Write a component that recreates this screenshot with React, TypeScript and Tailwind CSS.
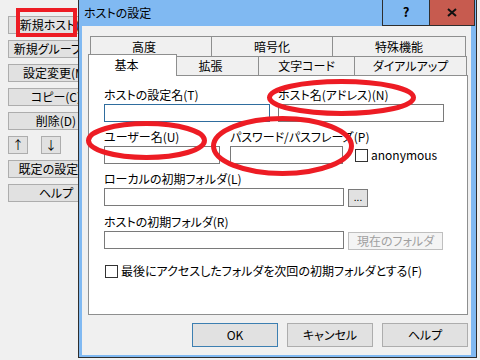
import React from "react";

const FONT =
  "[font-family:'Noto_Sans_CJK_JP','Noto_Sans',sans-serif] [font-feature-settings:'palt']";

function LeftBtn({ label }: { label: string }) {
  return (
    <div className="h-[18px] w-[96px] border border-[#adadad] bg-[#e1e1e1] flex items-center justify-center text-[12px] leading-none whitespace-nowrap text-black">
      {label}
    </div>
  );
}

function Input({ w, focus }: { w: string; focus?: boolean }) {
  return (
    <div
      className={`${w} h-[18px] bg-white border ${
        focus ? "border-[#2f6d9e]" : "border-[#7a7a7a]"
      }`}
    />
  );
}

function Label({ children }: { children: React.ReactNode }) {
  return (
    <div className="h-[16px] leading-[16px] text-[12px] whitespace-nowrap text-black">
      {children}
    </div>
  );
}

function CheckBox() {
  return <div className="w-[13px] h-[13px] border border-[#333333] bg-white shrink-0" />;
}

function DlgBtn({ label, def }: { label: string; def?: boolean }) {
  return (
    <div
      className={`w-[86px] h-[24px] flex items-center justify-center text-[12px] bg-[#e1e1e1] border ${
        def ? "border-[#3c7fb1]" : "border-[#adadad]"
      }`}
    >
      {label}
    </div>
  );
}

export default function App() {
  return (
    <div
      className={`relative w-[480px] h-[360px] overflow-hidden bg-[#f0f0f0] text-black ${FONT}`}
    >
      {/* Left host list buttons */}
      <div className="pt-[16px] pl-[8px] flex flex-col gap-[6px]">
        <LeftBtn label="新規ホスト(N)" />
        <LeftBtn label="新規グループ(G)" />
        <LeftBtn label="設定変更(M)" />
        <LeftBtn label="コピー(C)" />
        <LeftBtn label="削除(D)" />
        <div className="flex gap-[13px]">
          <div className="w-[20px] h-[18px] border border-[#adadad] bg-[#e1e1e1] flex items-center justify-center text-[12px]">
            ↑
          </div>
          <div className="w-[20px] h-[18px] border border-[#adadad] bg-[#e1e1e1] flex items-center justify-center text-[12px]">
            ↓
          </div>
        </div>
        <LeftBtn label="既定の設定(S)" />
        <LeftBtn label="ヘルプ" />
      </div>

      {/* Dialog window */}
      <div className="absolute left-[78px] top-[-1px] w-[399px] h-[359px] border border-[#2e2e2e] bg-[#80b9f2] flex flex-col">
        <div className="relative h-[26px] shrink-0 flex items-center pl-[5px] text-[12px]">
          ホストの設定
          <div className="absolute right-[1px] top-[-1px] flex">
            <div className="w-[47px] h-[27px] border border-r-0 border-[#2e2e2e] bg-[#80b9f2] flex items-center justify-center text-[13px] font-bold pb-[1px]">
              ?
            </div>
            <div className="w-[46px] h-[27px] border border-[#2e2e2e] bg-[#c75b4f] flex items-center justify-center">
              <svg width="10" height="9" viewBox="0 0 10 9">
                <path d="M1 1 L9 8 M9 1 L1 8" stroke="#111" strokeWidth="2" />
              </svg>
            </div>
          </div>
        </div>

        <div className="flex-1 ml-[3px] mr-[5px] mb-[2px] bg-[#f0f0f0] pt-[10px] pl-[6px] pr-[3px] flex flex-col">
          {/* tabs back row */}
          <div className="flex ml-[2px] h-[20px] text-[12px]">
            <div className="w-[122px] h-[20px] border border-b-0 border-[#8e8f8f] bg-[#f0f0f0] flex items-center justify-center pr-[14px]">
              高度
            </div>
            <div className="w-[122px] h-[20px] -ml-px border border-b-0 border-[#8e8f8f] bg-[#f0f0f0] flex items-center justify-center">
              暗号化
            </div>
            <div className="w-[134px] h-[20px] -ml-px border border-b-0 border-[#8e8f8f] bg-[#f0f0f0] flex items-center justify-center">
              特殊機能
            </div>
          </div>
          {/* tabs front row */}
          <div className="flex items-end h-[19px] text-[12px]">
            <div className="relative z-10 w-[89px] h-[22px] -mb-px border border-b-0 border-[#8e8f8f] bg-white flex items-center justify-center pr-[12px] pb-[2px]">
              基本
            </div>
            <div className="w-[83px] h-[19px] -ml-px border border-b-0 border-[#8e8f8f] bg-[#f0f0f0] flex items-center justify-center pr-[14px]">
              拡張
            </div>
            <div className="w-[97px] h-[19px] -ml-px border border-b-0 border-[#8e8f8f] bg-[#f0f0f0] flex items-center justify-center">
              文字コード
            </div>
            <div className="w-[113px] h-[19px] -ml-px border border-b-0 border-[#8e8f8f] bg-[#f0f0f0] flex items-center justify-center">
              ダイアルアップ
            </div>
          </div>

          {/* panel */}
          <div className="w-[380px] h-[240px] shrink-0 border border-[#8e8f8f] bg-white pl-[15px] pt-[11px] flex flex-col">
            <div className="flex gap-[8px]">
              <div className="w-[166px] shrink-0 flex flex-col gap-[1px]">
                <Label>ホストの設定名(T)</Label>
                <Input w="w-[166px]" focus />
              </div>
              <div className="w-[166px] shrink-0 flex flex-col gap-[1px]">
                <Label>ホスト名(アドレス)(N)</Label>
                <Input w="w-[166px]" />
              </div>
            </div>

            <div className="flex items-end mt-[7px]">
              <div className="w-[116px] shrink-0 flex flex-col gap-[1px]">
                <Label>ユーザー名(U)</Label>
                <Input w="w-[116px]" />
              </div>
              <div className="w-[113px] shrink-0 flex flex-col gap-[1px] ml-[10px]">
                <Label>パスワード/パスフレーズ(P)</Label>
                <Input w="w-[113px]" />
              </div>
              <div className="flex items-center h-[18px] ml-[12px] gap-[3px]">
                <CheckBox />
                <span className="text-[12px] leading-none">anonymous</span>
              </div>
            </div>

            <div className="flex flex-col gap-[1px] mt-[7px]">
              <Label>ローカルの初期フォルダ(L)</Label>
              <div className="flex gap-[4px]">
                <Input w="w-[240px]" />
                <div className="w-[20px] h-[18px] mt-[1px] border border-[#7a7a7a] bg-[#e1e1e1] flex items-center justify-center text-[10px] leading-none pb-[3px]">
                  ...
                </div>
              </div>
            </div>

            <div className="flex flex-col gap-[1px] mt-[7px]">
              <Label>ホストの初期フォルダ(R)</Label>
              <div className="flex gap-[4px]">
                <Input w="w-[240px]" />
                <div className="w-[95px] h-[18px] mt-[1px] border border-[#bfbfbf] bg-[#f4f4f4] flex items-center justify-center text-[12px] text-[#a0a0a0]">
                  現在のフォルダ
                </div>
              </div>
            </div>

            <div className="flex items-center h-[16px] mt-[13px] ml-[1px] gap-[3px]">
              <CheckBox />
              <span className="text-[12px] whitespace-nowrap">
                最後にアクセスしたフォルダを次回の初期フォルダとする(F)
              </span>
            </div>
          </div>

          {/* dialog buttons */}
          <div className="flex justify-end gap-[9px] mt-[8px]">
            <DlgBtn label="OK" def />
            <DlgBtn label="キャンセル" />
            <DlgBtn label="ヘルプ" />
          </div>
        </div>
      </div>

      {/* red annotations */}
      <svg
        className="absolute left-0 top-0 pointer-events-none z-20"
        width="480"
        height="360"
        viewBox="0 0 480 360"
      >
        <rect x="18" y="10" width="57" height="25" fill="none" stroke="#ed1c24" strokeWidth="4" />
        <ellipse cx="341.5" cy="97.5" rx="72" ry="16" fill="none" stroke="#ed1c24" strokeWidth="5" />
        <ellipse cx="146.5" cy="140.5" rx="58" ry="17" fill="none" stroke="#ed1c24" strokeWidth="5" />
        <ellipse cx="282.5" cy="146" rx="69" ry="27.5" fill="none" stroke="#ed1c24" strokeWidth="5" />
      </svg>
    </div>
  );
}
